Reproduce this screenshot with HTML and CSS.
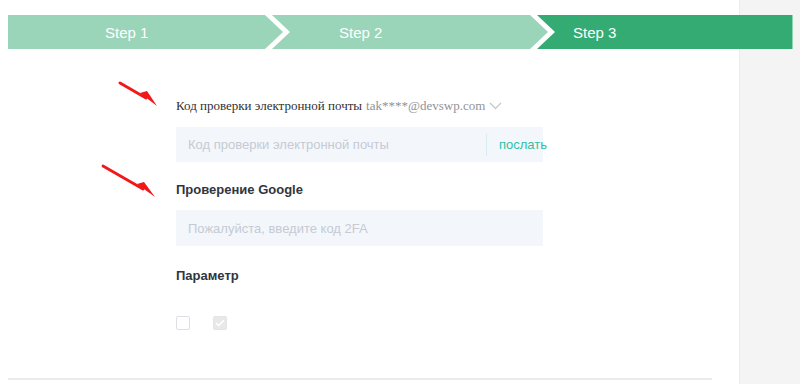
FILE: index.html
```html
<!doctype html>
<html lang="ru">

<head>
  <meta charset="UTF-8" />
  <meta name="viewport" content="width=device-width, initial-scale=1.0" />
  <title>Step 3</title>
  <link rel="stylesheet" href="styles.css">
</head>

<body>
  <div class="main">
    <div class="steps">
      <div class="step step-first">Step 1</div>
      <div class="step step-mid">Step 2</div>
      <div class="step step-last active">Step 3</div>
    </div>

    <div class="form">
      <div class="email-label">
        <span class="email-title">Код проверки электронной почты</span>
        <span class="email-addr">tak****@devswp.com</span>
        <svg class="email-caret" width="13" height="8" viewBox="0 0 13 8">
          <path d="M1 1l5.5 5.5L12 1" fill="none" stroke="#c0c4cc" stroke-width="1.2" />
        </svg>
      </div>
      <div class="field field-email">
        <input class="field-input" type="text" placeholder="Код проверки электронной почты">
        <span class="field-divider"></span>
        <span class="field-send">послать</span>
      </div>

      <div class="form-label label-google">Проверение Google</div>
      <div class="field">
        <input class="field-input" type="text" placeholder="Пожалуйста, введите код 2FA">
      </div>

      <div class="form-label label-param">Параметр</div>
      <div class="checks">
        <span class="check"></span>
        <span class="check checked">
          <svg width="10" height="8" viewBox="0 0 10 8">
            <path d="M1 4l2.6 2.6L9 1.2" fill="none" stroke="#fff" stroke-width="1.6" />
          </svg>
        </span>
      </div>
    </div>

    <div class="bottom-line"></div>

    <!-- annotation arrows -->
    <svg class="mark mark-one" width="44" height="30" viewBox="0 0 44 30">
      <path d="M2 2L28 17" stroke="#f01818" stroke-width="2.8" stroke-linecap="round" />
      <path d="M22 12L39 25L29 10Z" fill="#f01818" />
    </svg>
    <svg class="mark mark-two" width="58" height="38" viewBox="0 0 58 38">
      <path d="M2 2L42 25" stroke="#f01818" stroke-width="2.8" stroke-linecap="round" />
      <path d="M36 20L54 33L43 18Z" fill="#f01818" />
    </svg>
  </div>
</body>

</html>
```

FILE: styles.css
```css
html,
body {
  margin: 0;
  height: 100%;
}

body {
  font-family: "Liberation Sans", Arial, sans-serif;
  background: linear-gradient(to right, #fff 739px, #ececec 739px, #ececec 740px, #f4f4f4 740px);
  overflow: hidden;
}

.main {
  position: relative;
  width: 739px;
  height: 384px;
  padding-top: 15px;
  box-sizing: border-box;
}

.steps {
  display: flex;
  width: 785px;
  height: 34px;
  margin-left: 8px;
}

.step {
  display: flex;
  align-items: center;
  height: 34px;
  background-color: #9ad5b9;
  color: #fff;
  font-size: 15px;
  box-sizing: border-box;
}

.step-first {
  width: 275px;
  padding-left: 97px;
  clip-path: polygon(0 0, calc(100% - 18px) 0, 100% 50%, calc(100% - 18px) 100%, 0 100%);
}

.step-mid {
  width: 276px;
  margin-left: -11px;
  padding-left: 67px;
  clip-path: polygon(0 0, calc(100% - 18px) 0, 100% 50%, calc(100% - 18px) 100%, 0 100%, 18px 50%);
}

.step-last {
  flex: 1;
  margin-left: -11px;
  padding-left: 36px;
  clip-path: polygon(0 0, 100% 0, 100% 100%, 0 100%, 18px 50%);
}

.step.active {
  background-color: #34ab73;
  box-shadow: inset -1px 0 0 #8fd6b2;
}

.form {
  padding-left: 176px;
}

.email-label {
  display: flex;
  align-items: center;
  height: 20px;
  margin-top: 47px;
  font-family: "Liberation Serif", "Times New Roman", serif;
  font-size: 13px;
}

.email-title {
  color: #303133;
}

.email-addr {
  margin-left: 4px;
  color: #909399;
}

.email-caret {
  margin-left: 4px;
}

.field {
  display: flex;
  align-items: center;
  width: 367px;
  height: 36px;
  margin-top: 10px;
  background-color: #f3f7fc;
}

.field-email {
  height: 35px;
  margin-top: 11px;
}

.field-input {
  flex: 1;
  min-width: 0;
  height: 100%;
  padding: 0 12px;
  border: none;
  outline: none;
  background: transparent;
  font-family: "Liberation Sans", Arial, sans-serif;
  font-size: 13px;
  color: #303133;
}

.field-input::placeholder {
  color: #c5cad3;
}

.field-divider {
  width: 1px;
  height: 22px;
  background-color: #d6ecf3;
}

.field-send {
  width: 56px;
  padding-left: 12px;
  box-sizing: border-box;
  color: #2fbfa6;
  font-size: 13px;
  white-space: nowrap;
}

.form-label {
  height: 20px;
  line-height: 20px;
  color: #303540;
  font-size: 13px;
  font-weight: bold;
}

.label-google {
  margin-top: 18px;
}

.label-param {
  margin-top: 20px;
}

.checks {
  display: flex;
  gap: 23px;
  margin-top: 30px;
}

.check {
  display: flex;
  align-items: center;
  justify-content: center;
  width: 14px;
  height: 14px;
  border: 1px solid #dcdfe6;
  border-radius: 2px;
  background-color: #fff;
  box-sizing: border-box;
}

.check.checked {
  border-color: #e4e4e4;
  background-color: #e8e8e8;
}

.bottom-line {
  position: absolute;
  left: 8px;
  top: 378px;
  width: 704px;
  height: 2px;
  background-color: #ebebeb;
}

.mark {
  position: absolute;
}

.mark-one {
  left: 118px;
  top: 81px;
}

.mark-two {
  left: 101px;
  top: 164px;
}
```
